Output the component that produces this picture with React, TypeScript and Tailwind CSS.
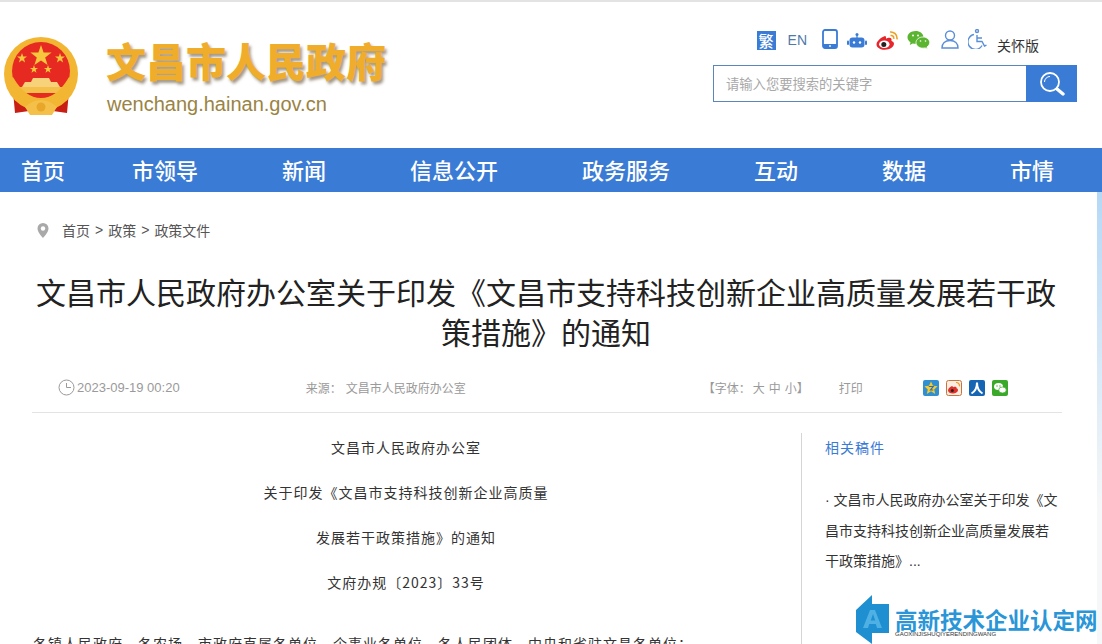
const cjk = "font-['Noto_Sans_CJK_SC','Liberation_Sans',sans-serif]";

function Emblem() {
  return (
    <svg width="76" height="80" viewBox="0 0 76 80" className="shrink-0">
      <path d="M10 54 L12 76 L26 74 Q38 79 50 74 L64 76 L66 54 Z" fill="#c81e14" />
      <circle cx="38" cy="37" r="37" fill="#f2b632" />
      <circle cx="38" cy="34" r="29" fill="#e62a22" />
      <path d="M38 8l2.600 7.600h8l-6.400 4.800 2.400 7.600-6.600-4.600-6.600 4.600 2.400-7.600-6.400-4.800h8z" fill="#f7c63c" />
      <path d="M19 16l1.200 3.600h3.800l-3 2.200 1.100 3.600-3.100-2.200-3.100 2.200 1.100-3.600-3-2.200h3.800z" fill="#f7c63c" />
      <path d="M57 16l1.200 3.600h3.800l-3 2.200 1.100 3.600-3.100-2.200-3.100 2.200 1.100-3.600-3-2.200h3.800z" fill="#f7c63c" />
      <path d="M31 28l1 3h3l-2.400 1.800.9 3-2.500-1.800-2.500 1.800.9-3-2.400-1.800h3z" fill="#f7c63c" />
      <path d="M45 28l1 3h3l-2.400 1.800.9 3-2.500-1.800-2.500 1.800.9-3-2.400-1.800h3z" fill="#f7c63c" />
      <path d="M30 41h16l2 4h6l3 5H19l3-5h6z" fill="#f7d27a" />
      <path d="M13 50h50v6H13z" fill="#f4c04a" />
      <path d="M5 44 Q18 68 38 68 Q58 68 71 44 L66 40 Q54 61 38 61 Q22 61 10 40 Z" fill="#f2b632" />
      <path d="M22 70 Q38 56 54 70 L49 78 H27 Z" fill="#f4c04a" />
      <circle cx="38" cy="70" r="4.500" fill="#e8a62a" />
    </svg>
  );
}

function TopIcons() {
  return (
    <div className="flex h-[24px] items-center">
      <span className={`flex h-[19px] w-[19px] items-center justify-center bg-[#3a7bd5] text-[15px] font-medium leading-none text-white ${cjk}`}>繁</span>
      <span className="ml-[12px] font-['Liberation_Sans',sans-serif] text-[14px] leading-none text-[#4f79a8]">EN</span>
      <svg width="16" height="20" viewBox="0 0 16 20" className="ml-[15px] -mt-[2px]">
        <rect x="1" y="1" width="14" height="18" rx="2" fill="none" stroke="#3a7bd5" strokeWidth="1.800" />
        <rect x="1" y="15" width="14" height="4" fill="#3a7bd5" />
        <circle cx="8" cy="17" r=".9" fill="#fff" />
      </svg>
      <svg width="20" height="15" viewBox="0 0 20 15" className="ml-[9px]">
        <circle cx="10" cy="1.500" r="1.500" fill="#3a7bd5" />
        <rect x="9.400" y="1.500" width="1.200" height="3.500" fill="#3a7bd5" />
        <rect x="2.500" y="4.500" width="15" height="10" rx="3" fill="#3a7bd5" />
        <rect x="0" y="7.500" width="2" height="4.500" rx="1" fill="#3a7bd5" />
        <rect x="18" y="7.500" width="2" height="4.500" rx="1" fill="#3a7bd5" />
        <circle cx="7" cy="9.500" r="1.200" fill="#fff" />
        <circle cx="13" cy="9.500" r="1.200" fill="#fff" />
      </svg>
      <svg width="22" height="19" viewBox="0 0 22 19" className="ml-[9px]">
        <path d="M9 5C4.500 6.500 .5 10.500 .5 13.500c0 3.200 4 5.300 8.300 5.300 5 0 9.200-3 9.200-6 0-2-2-2.500-2.600-3 .6-2 0-3.500-3-3-1 .2-2 1-2.400 1 .2-1.800-.3-3-1-2.800z" fill="#e6252c" />
        <ellipse cx="8.300" cy="13.300" rx="5.200" ry="3.800" fill="#fff" />
        <circle cx="7.800" cy="13.500" r="2.500" fill="#222" />
        <path d="M14 1c3.800-.5 7.500 2.500 7 7.300M14.500 4.500c2.200-.3 3.500 1 3.200 3.300" fill="none" stroke="#f0a020" strokeWidth="1.600" />
      </svg>
      <svg width="24" height="20" viewBox="0 0 24 20" className="ml-[9px]">
        <path d="M8.500 1C4 1 .5 3.800.5 7.300c0 2 1.100 3.700 3 4.900L2.800 15l2.900-1.600c1 .3 1.900.4 2.800.4 4.500 0 8-2.900 8-6.500S13 1 8.500 1z" fill="#5cb531" />
        <path d="M16 7c-3.900 0-7 2.500-7 5.600s3.100 5.600 7 5.600c.8 0 1.500-.1 2.200-.3l2.300 1.300-.6-2.200c1.700-1 2.800-2.600 2.800-4.400C22.700 9.500 19.700 7 16 7z" fill="#5cb531" stroke="#fff" strokeWidth=".8" />
        <circle cx="6" cy="5.500" r="1" fill="#fff" />
        <circle cx="11" cy="5.500" r="1" fill="#fff" />
        <circle cx="13.500" cy="11" r=".8" fill="#fff" />
        <circle cx="18.500" cy="11" r=".8" fill="#fff" />
      </svg>
      <svg width="18" height="19" viewBox="0 0 18 19" className="ml-[10px] -mt-[2px]" fill="none" stroke="#5a8fd8" strokeWidth="1.400">
        <circle cx="9" cy="5.500" r="4.500" />
        <path d="M1 18c0-4.500 3-7.500 8-7.500s8 3 8 7.500z" />
      </svg>
      <svg width="19" height="20" viewBox="0 0 19 20" className="ml-[9px] -mt-[2px]" fill="none" stroke="#5a8fd8" strokeWidth="1.400">
        <circle cx="9" cy="2" r="1.500" />
        <path d="M9 6v6.500h5l2.500 4.500 2-.8M9 9h5" />
        <path d="M6 5.500A7.500 7.500 0 1 0 14 16.500" />
      </svg>
      <span className={`ml-[10px] mt-[10px] text-[14px] leading-none text-[#333] ${cjk}`}>关怀版</span>
    </div>
  );
}

function SearchBox() {
  return (
    <div className="flex h-[37px] w-[364px] border border-[#5b86bb]">
      <div className={`flex flex-1 items-center pl-[12px] text-[13.300px] text-[#a8a8a8] ${cjk}`}>请输入您要搜索的关键字</div>
      <div className="-my-px -mr-px flex w-[51px] items-center justify-center bg-[#3a7bd5]">
        <svg width="26" height="26" viewBox="0 0 26 26" fill="none">
          <circle cx="11" cy="11" r="9" stroke="#fff" strokeWidth="1.800" />
          <path d="M5.500 11A5.500 5.500 0 0 1 11 5.500" stroke="#fff" strokeWidth="1" />
          <path d="M18 18l6 5" stroke="#fff" strokeWidth="3.400" strokeLinecap="round" />
        </svg>
      </div>
    </div>
  );
}

function Pin() {
  return (
    <svg width="12" height="15" viewBox="0 0 12 15" className="shrink-0">
      <path d="M6 0a5.500 5.500 0 0 0-5.500 5.500C.5 9.500 6 15 6 15s5.500-5.500 5.500-9.500A5.500 5.500 0 0 0 6 0z" fill="#a9a9a9" />
      <circle cx="6" cy="5.500" r="2.200" fill="#fff" />
    </svg>
  );
}

function ShareIcons() {
  return (
    <div className="ml-[60px] flex gap-[7px]">
      <svg width="16" height="16" viewBox="0 0 16 16">
        <rect width="16" height="16" rx="2" fill="#2f8fd0" />
        <path d="M8 1.500l2 4.300 4.600.5-3.400 3.100 1 4.600L8 11.200l-4.200 2.800 1-4.600L1.400 6.300 6 5.800z" fill="#f6c92d" />
        <path d="M5.800 6.500h4.400L7.500 10h2.800" fill="none" stroke="#2f6fb0" strokeWidth="1.200" />
      </svg>
      <svg width="16" height="16" viewBox="0 0 16 16">
        <rect x=".5" y=".5" width="15" height="15" rx="2" fill="#fbeee0" stroke="#c9743f" />
        <path d="M6 6C3.500 7 2 9 2 10.500 2 12.500 4.500 13.500 6.500 13.500c3 0 5.500-1.500 5.500-3.500 0-1-1-1.500-1.500-1.700.3-1.500-1.500-1.800-3-1-.3-.8-.6-1-1-.8z" fill="#e0302c" />
        <circle cx="6.300" cy="10.500" r="1.500" fill="#222" />
        <path d="M10 2.500c2-.2 3.800 1.500 3.500 3.800" fill="none" stroke="#ef9a2b" strokeWidth="1.200" />
      </svg>
      <svg width="16" height="16" viewBox="0 0 16 16">
        <rect width="16" height="16" rx="2" fill="#1664b4" />
        <path d="M8 2.500C8 8 6 11.500 2.500 13.500M8 2.500c0 5.500 2 9 5.500 11" fill="none" stroke="#fff" strokeWidth="2" />
      </svg>
      <svg width="16" height="16" viewBox="0 0 16 16">
        <rect width="16" height="16" rx="2" fill="#3aa828" />
        <ellipse cx="6.500" cy="6.500" rx="4.500" ry="3.600" fill="#fff" />
        <ellipse cx="10.500" cy="10" rx="3.800" ry="3" fill="#fff" stroke="#3aa828" strokeWidth=".7" />
        <circle cx="5" cy="6" r=".7" fill="#3aa828" />
        <circle cx="8" cy="6" r=".7" fill="#3aa828" />
      </svg>
    </div>
  );
}

function Watermark() {
  return (
    <div className="absolute bottom-0 left-[855px] flex h-[49px] items-start">
      <svg width="36" height="49" viewBox="0 0 36 49" className="shrink-0">
        <path d="M1 15 L17 0 L17 9 L34 9 L34 38 L17 38 L17 49 L1 37 Z" fill="#1e8fd0" />
        <path d="M8 33L15 15h5l7 18h-5l-1.200-4h-6.600L13 33zM15.800 25.500h4.400L18 19z" fill="#4fb0e4" />
      </svg>
      <div className="ml-[4px] pt-[12px]">
        <div className={`whitespace-nowrap text-[22.500px] font-bold leading-[24px] text-[#2a96d8] ${cjk}`}>高新技术企业认定网</div>
        <div className="font-['Liberation_Sans',sans-serif] text-[6px] leading-[6px] text-[#333]">GAOXINJISHUQIYERENDINGWANG</div>
      </div>
    </div>
  );
}

const navItems = ["市领导", "新闻", "信息公开", "政务服务", "互动", "数据", "市情"];
const centerLines = ["文昌市人民政府办公室", "关于印发《文昌市支持科技创新企业高质量", "发展若干政策措施》的通知", "文府办规〔2023〕33号"];

export default function App() {
  return (
    <div className={`relative h-[644px] w-[1102px] overflow-hidden bg-white ${cjk}`}>
      <header className="flex h-[148px] justify-between border-t-2 border-[#e3e3e3] pl-[3px] pr-[25px] pt-[1px]">
        <div className="flex pt-[34px]">
          <Emblem />
          <div className="ml-[28px]">
            <h1 className="-ml-px -mt-[2px] text-[40px] font-black leading-[50px] text-[#f0ac2b] [text-shadow:2px_3px_3px_rgba(90,70,40,0.55)]">文昌市人民政府</h1>
            <p className="mt-[8px] font-['Liberation_Sans',sans-serif] text-[20px] leading-[22px] text-[#9a8343]">wenchang.hainan.gov.cn</p>
          </div>
        </div>
        <div className="flex flex-col items-end pt-[25px]">
          <div className="mr-[38px]"><TopIcons /></div>
          <div className="mt-[13px]"><SearchBox /></div>
        </div>
      </header>

      <nav className="flex h-[44px] items-center gap-[84px] bg-[#3a7bd5] pb-[2px] pl-[21px] text-[22px] font-medium leading-none text-white">
        <a className="mr-[-17px]">首页</a>
        {navItems.map((item) => (
          <a key={item}>{item}</a>
        ))}
      </nav>

      <main className="pl-[32px] pr-[40px]">
        <div className="flex h-[79px] items-center pl-[5px] pb-[3px] text-[14px] text-[#555]">
          <Pin />
          <span className="ml-[13px]">首页</span>
          <span className="mx-[5px] font-['Liberation_Sans',sans-serif]">&gt;</span>
          <span>政策</span>
          <span className="mx-[5px] font-['Liberation_Sans',sans-serif]">&gt;</span>
          <span>政策文件</span>
        </div>

        <h2 className="-ml-[2px] text-center text-[30px] font-normal leading-[40px] text-[#222]">
          文昌市人民政府办公室关于印发《文昌市支持科技创新企业高质量发展若干政策措施》的通知
        </h2>

        <div className="mt-[14px] flex h-[48px] items-center border-b border-[#e3e3e3] pb-[2px] text-[12px] text-[#9a9a9a]">
          <svg width="17" height="17" viewBox="0 0 17 17" className="ml-[26px] shrink-0" fill="none" stroke="#9a9a9a">
            <circle cx="8.500" cy="8.500" r="7.500" />
            <path d="M8.500 4v4.500H13" />
          </svg>
          <span className="ml-[2px] font-['Liberation_Sans',sans-serif] text-[13px]">2023-09-19 00:20</span>
          <span className="ml-[126px]">来源：</span>
          <span className="ml-[4px]">文昌市人民政府办公室</span>
          <span className="ml-[237px]">【字体：</span>
          <span className="ml-[2px] [word-spacing:1.300px]">大 中 小】</span>
          <span className="ml-[30px]">打印</span>
          <ShareIcons />
        </div>

        <div className="mt-[20px] flex">
          <article className="-mt-px w-[769px] pl-[1px] pr-[22px] text-[14px] leading-[30px] tracking-[1px] text-[#333]">
            {centerLines.map((line) => (
              <p key={line} className="mb-[15px] text-center">{line}</p>
            ))}
            <p className="mt-[31px] whitespace-nowrap">各镇人民政府、各农场、市政府直属各单位、企事业各单位、各人民团体、中央和省驻文昌各单位：</p>
          </article>
          <aside className="w-[261px] border-l border-[#d5d5d5] pl-[23px] text-[14px] text-[#333]">
            <h3 className="-mt-px h-[30px] text-[14px] font-normal leading-[30px] tracking-[1px] text-[#3a7bd5]">相关稿件</h3>
            <p className="mt-[22px] w-[236px] leading-[30px]"><span className="font-['Liberation_Sans',sans-serif]">· </span>文昌市人民政府办公室关于印发《文昌市支持科技创新企业高质量发展若干政策措施》<span className="font-['Liberation_Sans',sans-serif]">...</span></p>
          </aside>
        </div>
      </main>

      <div className="absolute bottom-0 right-0 top-[192px] w-[5px] bg-[linear-gradient(#b5d8f6,#f6f7f8_70%)]" />
      <Watermark />
    </div>
  );
}
